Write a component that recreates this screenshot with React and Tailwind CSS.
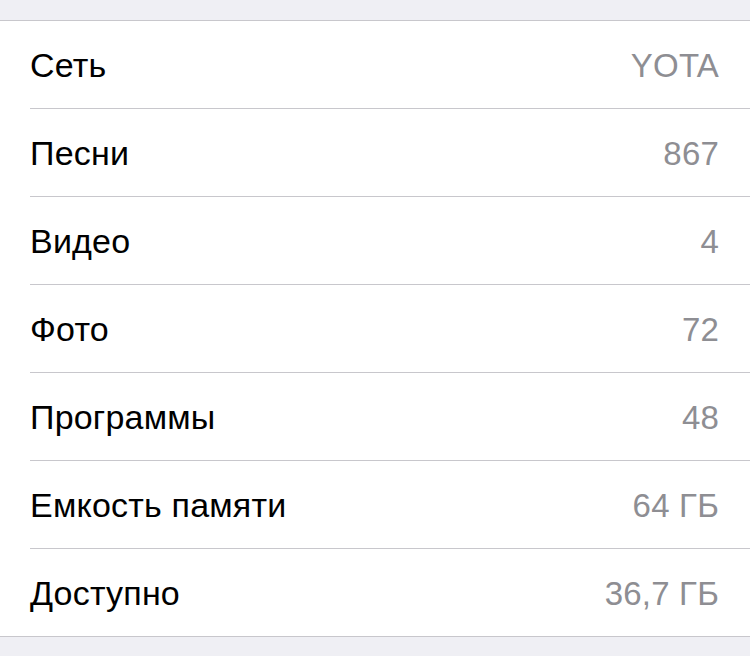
const rows = [
  ["Сеть", "YOTA"],
  ["Песни", "867"],
  ["Видео", "4"],
  ["Фото", "72"],
  ["Программы", "48"],
  ["Емкость памяти", "64 ГБ"],
  ["Доступно", "36,7 ГБ"],
];

export default function App() {
  return (
    <div className="w-[750px] h-[656px] bg-[#efeff4] pt-[20px] overflow-hidden" style={{ fontFamily: '"Liberation Sans", Arial, sans-serif' }}>
      <div className="bg-white border-y border-[#c8c7cc] pl-[30px]">
        {rows.map(([label, value], i) => (
          <div
            key={label}
            className={`flex items-center justify-between pt-[2px] pr-[31px] ${i < rows.length - 1 ? "h-[88px] border-b border-[#c8c7cc]" : "h-[87px]"}`}
          >
            <span className="text-[34px] tracking-[0.2px] text-black">{label}</span>
            <span className="text-[33px] tracking-[0.2px] text-[#8e8e93]">{value}</span>
          </div>
        ))}
      </div>
    </div>
  );
}
